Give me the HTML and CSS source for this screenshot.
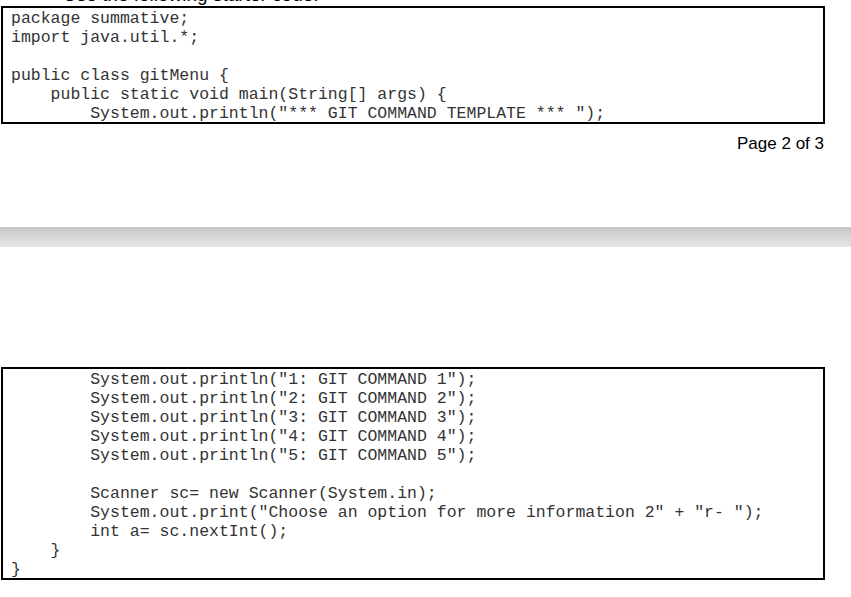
FILE: index.html
```html
<!DOCTYPE html>
<html>
<head>
<meta charset="utf-8">
<link rel="stylesheet" href="styles.css">
</head>
<body>
<div class="sheet">
  <div class="caption">Use the following starter code:</div>
  <pre class="code-box top-box">package summative;
import java.util.*;

public class gitMenu {
    public static void main(String[] args) {
        System.out.println("*** GIT COMMAND TEMPLATE *** ");</pre>
  <div class="page-num">Page 2 of 3</div>
</div>
<div class="page-gap"></div>
<div class="sheet second">
  <pre class="code-box bottom-box">        System.out.println("1: GIT COMMAND 1");
        System.out.println("2: GIT COMMAND 2");
        System.out.println("3: GIT COMMAND 3");
        System.out.println("4: GIT COMMAND 4");
        System.out.println("5: GIT COMMAND 5");

        Scanner sc= new Scanner(System.in);
        System.out.print("Choose an option for more information 2" + "r- ");
        int a= sc.nextInt();
    }
}</pre>
</div>
</body>
</html>
```
FILE: styles.css
```css
html, body {
  margin: 0;
  padding: 0;
  background: #ffffff;
  overflow: hidden;
}
body {
  width: 851px;
  height: 597px;
}
.sheet {
  display: flex;
  flex-direction: column;
}
.caption {
  margin-top: -15px;
  height: 20px;
  line-height: 20px;
  padding-left: 63px;
  font-family: "Liberation Sans", Arial, sans-serif;
  font-size: 19px;
  color: #000;
  white-space: nowrap;
}
.code-box {
  margin: 0 0 0 1px;
  border: 2px solid #000;
  padding: 1px 0 0 8px;
  box-sizing: border-box;
  width: 824px;
  font-family: "Liberation Mono", "Courier New", monospace;
  font-size: 16.5px;
  line-height: 19px;
  color: #333333;
  white-space: pre;
  overflow: hidden;
}
.top-box {
  margin-top: 1px;
  height: 118px;
}
.page-num {
  margin-top: 10px;
  padding-right: 27px;
  text-align: right;
  font-family: "Liberation Sans", Arial, sans-serif;
  font-size: 17px;
  line-height: 19px;
  color: #000;
}
.page-gap {
  margin-top: 74px;
  height: 20px;
  background: linear-gradient(to bottom, #c4c4c4 0%, #d2d2d2 35%, #dfdfdf 75%, #e4e4e4 100%);
}
.second {
  padding-top: 120px;
}
.bottom-box {
  height: 213px;
}
```
